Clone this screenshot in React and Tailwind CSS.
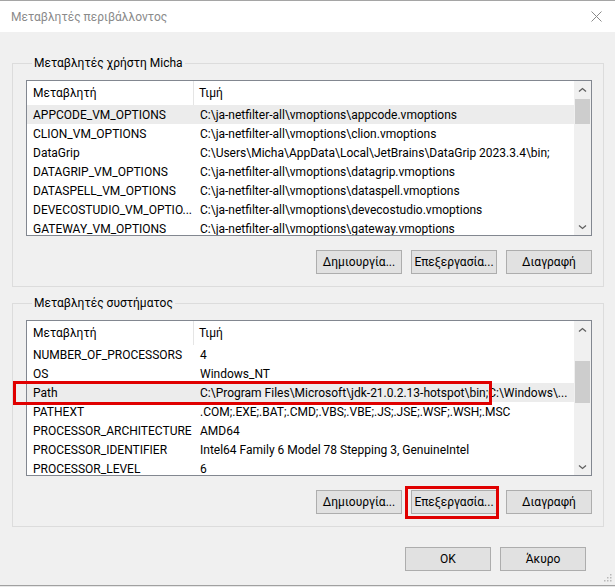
import React from "react";

const userVars = [
  ["APPCODE_VM_OPTIONS", "C:\\ja-netfilter-all\\vmoptions\\appcode.vmoptions"],
  ["CLION_VM_OPTIONS", "C:\\ja-netfilter-all\\vmoptions\\clion.vmoptions"],
  ["DataGrip", "C:\\Users\\Micha\\AppData\\Local\\JetBrains\\DataGrip 2023.3.4\\bin;"],
  ["DATAGRIP_VM_OPTIONS", "C:\\ja-netfilter-all\\vmoptions\\datagrip.vmoptions"],
  ["DATASPELL_VM_OPTIONS", "C:\\ja-netfilter-all\\vmoptions\\dataspell.vmoptions"],
  ["DEVECOSTUDIO_VM_OPTIO...", "C:\\ja-netfilter-all\\vmoptions\\devecostudio.vmoptions"],
  ["GATEWAY_VM_OPTIONS", "C:\\ja-netfilter-all\\vmoptions\\gateway.vmoptions"],
];

const sysVars = [
  ["NUMBER_OF_PROCESSORS", "4"],
  ["OS", "Windows_NT"],
  ["Path", "C:\\Program Files\\Microsoft\\jdk-21.0.2.13-hotspot\\bin;C:\\Windows\\..."],
  ["PATHEXT", ".COM;.EXE;.BAT;.CMD;.VBS;.VBE;.JS;.JSE;.WSF;.WSH;.MSC"],
  ["PROCESSOR_ARCHITECTURE", "AMD64"],
  ["PROCESSOR_IDENTIFIER", "Intel64 Family 6 Model 78 Stepping 3, GenuineIntel"],
  ["PROCESSOR_LEVEL", "6"],
];

function Chevron({ down }) {
  return (
    <svg width="9" height="6" viewBox="0 0 9 6" className="block">
      <path
        d={down ? "M1 1.5 L4.5 4.5 L8 1.5" : "M1 4.5 L4.5 1.5 L8 4.5"}
        fill="none"
        stroke="#606060"
        strokeWidth="1.3"
      />
    </svg>
  );
}

function Btn({ children }) {
  return (
    <button className="w-[86px] h-[24px] bg-[#e1e1e1] border border-[#adadad] text-[12px] text-black leading-none">
      {children}
    </button>
  );
}

function VarList({ rows, selected, thumbTop, thumbH }) {
  return (
    <div className="h-[156px] w-[566px] border border-[#828790] bg-white flex">
      <div className="flex-1 min-w-0 overflow-hidden">
        <div className="h-[24px] flex items-center">
          <div className="w-[167px] shrink-0 h-full pl-[6px] flex items-center border-r border-[#e5e5e5]">Μεταβλητή</div>
          <div className="pl-[5px]">Τιμή</div>
        </div>
        {rows.map(([n, v], i) => (
          <div
            key={n}
            className={`h-[19px] flex items-center whitespace-nowrap ${i === selected ? "bg-[#ececec]" : ""}`}
          >
            <div className="w-[167px] shrink-0 pl-[6px]">{n}</div>
            <div className="pl-[6px]">{v}</div>
          </div>
        ))}
      </div>
      <div className="w-[17px] shrink-0 bg-[#f0f0f0] flex flex-col">
        <div className="h-[17px] flex items-center justify-center">
          <Chevron />
        </div>
        <div className="flex-1 flex flex-col">
          <div style={{ height: thumbTop }} />
          <div className="bg-[#cdcdcd] mx-[1px]" style={{ height: thumbH }} />
        </div>
        <div className="h-[17px] flex items-center justify-center">
          <Chevron down />
        </div>
      </div>
    </div>
  );
}

function Group({ title, children }) {
  return (
    <fieldset className="min-w-0 w-[592px] border border-[#dcdcdc] pl-[13px] pr-[11px] pt-[9px] pb-[12px]">
      <legend className="ml-[6px] px-[2px] leading-[16px]">{title}</legend>
      {children}
    </fieldset>
  );
}

export default function App() {
  return (
    <div className="relative w-[615px] h-[587px] flex flex-col bg-[#f0f0f0] text-[12px] text-black font-['Roboto','Noto_Sans',sans-serif] overflow-hidden">
      <div className="h-[32px] bg-white border-t border-[#a5a5a5] flex items-center justify-between pl-[11px] pr-[13px]">
        <span className="text-[#8a8a8a]">Μεταβλητές περιβάλλοντος</span>
        <svg width="11" height="11" viewBox="0 0 11 11">
          <path d="M0.5 0.5 L10.5 10.5 M10.5 0.5 L0.5 10.5" stroke="#8a8a8a" strokeWidth="1" />
        </svg>
      </div>

      <div className="flex-1 flex flex-col pl-[12px] pt-[23px]">
        <Group title="Μεταβλητές χρήστη Micha">
          <VarList rows={userVars} selected={0} thumbTop={1} thumbH={25} />
          <div className="flex justify-end gap-[9px] mt-[14px]">
            <Btn>Δημιουργία...</Btn>
            <Btn>Επεξεργασία...</Btn>
            <Btn>Διαγραφή</Btn>
          </div>
        </Group>

        <div className="mt-[8px]">
          <Group title="Μεταβλητές συστήματος">
            <VarList rows={sysVars} selected={2} thumbTop={23} thumbH={42} />
            <div className="flex justify-end gap-[9px] mt-[14px]">
              <Btn>Δημιουργία...</Btn>
              <Btn>Επεξεργασία...</Btn>
              <Btn>Διαγραφή</Btn>
            </div>
          </Group>
        </div>

        <div className="flex justify-end gap-[9px] mt-[20px] pr-[29px]">
          <Btn>OK</Btn>
          <Btn>Άκυρο</Btn>
        </div>
      </div>

      <div className="h-[2px] border-t border-[#a0a0a0] bg-[#e8e8e8]" />

      {/* size grip */}
      <svg className="absolute right-[3px] bottom-[5px]" width="8" height="8" viewBox="0 0 8 8">
        <rect x="6" y="0" width="1.5" height="1.5" fill="#b8b8b8" />
        <rect x="3" y="3" width="1.5" height="1.5" fill="#b8b8b8" />
        <rect x="6" y="3" width="1.5" height="1.5" fill="#b8b8b8" />
        <rect x="0" y="6" width="1.5" height="1.5" fill="#b8b8b8" />
        <rect x="3" y="6" width="1.5" height="1.5" fill="#b8b8b8" />
        <rect x="6" y="6" width="1.5" height="1.5" fill="#b8b8b8" />
      </svg>

      {/* annotation boxes */}
      <div className="absolute left-[13px] top-[381px] w-[479px] h-[24px] border-[3px] border-[#e00000]" />
      <div className="absolute left-[405px] top-[486px] w-[94px] h-[33px] border-[3px] border-[#e00000]" />
    </div>
  );
}
